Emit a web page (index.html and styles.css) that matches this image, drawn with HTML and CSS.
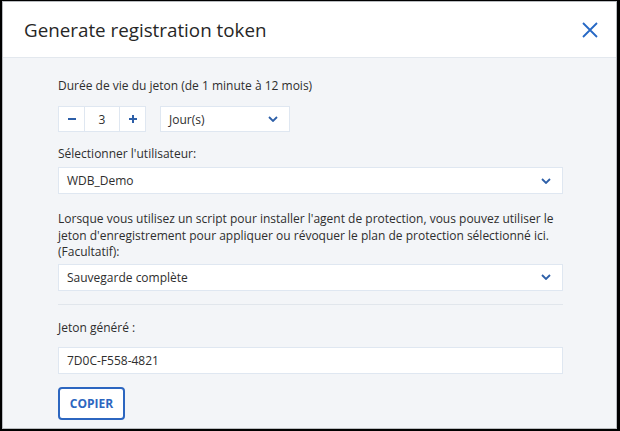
FILE: index.html
```html
<!DOCTYPE html>
<html lang="fr">
<head>
<meta charset="utf-8">
<title>Generate registration token</title>
<link rel="stylesheet" href="styles.css">
</head>
<body>
<div class="dialog">
  <header class="head">
    <h1 class="title">Generate registration token</h1>
    <svg class="close" width="16" height="16" viewBox="0 0 16 16"><path d="M1 1 L15 15 M15 1 L1 15" stroke="#2668c5" stroke-width="1.8" fill="none"/></svg>
  </header>
  <main class="content">
    <div class="label first">Durée de vie du jeton (de 1 minute à 12 mois)</div>
    <div class="row">
      <div class="stepper">
        <span class="step"><svg width="10" height="10" viewBox="0 0 10 10"><path d="M1 5 H9" stroke="#2d5fa8" stroke-width="2"/></svg></span>
        <span class="step val">3</span>
        <span class="step"><svg width="10" height="10" viewBox="0 0 10 10"><path d="M1 5 H9 M5 1 V9" stroke="#2d5fa8" stroke-width="2"/></svg></span>
      </div>
      <div class="select small"><span>Jour(s)</span><svg class="chev" width="10" height="6" viewBox="0 0 10 6"><path d="M1 1 L5 5 L9 1" stroke="#2d5fa8" stroke-width="1.8" fill="none"/></svg></div>
    </div>
    <div class="label">Sélectionner l'utilisateur:</div>
    <div class="select"><span>WDB_Demo</span><svg class="chev" width="10" height="6" viewBox="0 0 10 6"><path d="M1 1 L5 5 L9 1" stroke="#2d5fa8" stroke-width="1.8" fill="none"/></svg></div>
    <p class="para">Lorsque vous utilisez un script pour installer l'agent de protection, vous pouvez utiliser le jeton d'enregistrement pour appliquer ou révoquer le plan de protection sélectionné ici. (Facultatif):</p>
    <div class="select"><span>Sauvegarde complète</span><svg class="chev" width="10" height="6" viewBox="0 0 10 6"><path d="M1 1 L5 5 L9 1" stroke="#2d5fa8" stroke-width="1.8" fill="none"/></svg></div>
    <hr class="sep">
    <div class="label">Jeton généré :</div>
    <div class="input">7D0C-F558-4821</div>
    <button class="copy">COPIER</button>
  </main>
</div>
</body>
</html>
```
FILE: styles.css
```css
html { background: #000; }
body {
  margin: 0;
  padding: 1px 3px 2px 2px;
  font-family: "Open Sans", "Liberation Sans", sans-serif;
  color: #2e2e2e;
  font-size: 12px;
}
.dialog {
  height: 428px;
  box-sizing: border-box;
  background: #f3f5f8;
  border: 1px solid #b9bcc0;
  display: flex;
  flex-direction: column;
}
.head {
  height: 55px;
  background: #fff;
  border-bottom: 1px solid #e3e8ee;
  display: flex;
  align-items: center;
  justify-content: space-between;
  padding: 0 18px 0 21px;
  flex: none;
}
.title {
  margin: 0;
  font-weight: 400;
  font-size: 18.8px;
  color: #262626;
}
.close { display: block; }
.content {
  padding: 19px 53px 0 55px;
  display: flex;
  flex-direction: column;
  align-items: stretch;
}
.label {
  line-height: 18px;
  margin-top: 13px;
  margin-bottom: 4px;
}
.label.first { margin-top: 0; margin-bottom: 11px; }
.row { display: flex; gap: 14px; }
.stepper {
  display: flex;
  height: 26px;
  background: #fff;
  border: 1px solid #dfe7f1;
  box-sizing: border-box;
}
.step {
  width: 25px;
  display: flex;
  align-items: center;
  justify-content: center;
  border-right: 1px solid #dfe7f1;
}
.step:last-child { border-right: 0; }
.step.val { width: 34px; }
.select, .input {
  height: 27px;
  box-sizing: border-box;
  background: #fff;
  border: 1px solid #dfe7f1;
  display: flex;
  align-items: center;
  justify-content: space-between;
  padding: 0 11px 0 8px;
}
.select.small { width: 130px; height: 26px; }
.chev { display: block; }
.para {
  margin: 17px 0 3px;
  line-height: 16.5px;
}
.sep {
  border: 0;
  border-top: 1px solid #e1e6ec;
  margin: 13px 0 1px;
}
.input { margin-top: 6px; }
.copy {
  align-self: flex-start;
  margin-top: 13px;
  width: 67px;
  height: 33px;
  background: #fff;
  border: 2px solid #2c66c0;
  border-radius: 4px;
  color: #2c66c0;
  font-family: "Open Sans", "Liberation Sans", sans-serif;
  font-weight: 700;
  font-size: 12px;
  padding: 0;
}
```
